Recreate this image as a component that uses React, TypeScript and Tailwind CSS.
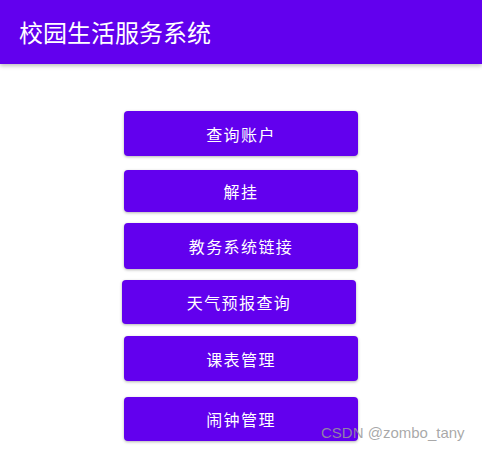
const font = { fontFamily: '"Noto Sans CJK SC", "Noto Sans", sans-serif' };

type Item = { label: string; cls: string };

const items: Item[] = [
  { label: "查询账户", cls: "mt-[47px] h-[45px]" },
  { label: "解挂", cls: "mt-[14px] h-[42px]" },
  { label: "教务系统链接", cls: "mt-[11px] h-[46px]" },
  { label: "天气预报查询", cls: "mt-[11px] h-[44px] -translate-x-[2px]" },
  { label: "课表管理", cls: "mt-[12px] h-[45px]" },
  { label: "闹钟管理", cls: "mt-[16px] h-[44px]" },
];

export default function App() {
  return (
    <div
      className="relative w-[482px] h-[452px] overflow-hidden bg-white"
      style={font}
    >
      <header className="h-16 bg-[#6200ee] flex items-center pl-[19px] shadow-[0_2px_4px_rgba(0,0,0,0.25)] relative z-10">
        <h1 className="text-white text-[24px] leading-none font-normal">
          校园生活服务系统
        </h1>
      </header>

      <div className="flex flex-col items-center">
        {items.map((it) => (
          <button
            key={it.label}
            type="button"
            className={`${it.cls} w-[234px] rounded-[4px] bg-[#6200ee] text-white text-[16px] tracking-[1.4px] flex items-center justify-center shadow-[0_1px_3px_rgba(0,0,0,0.3)]`}
          >
            {it.label}
          </button>
        ))}
      </div>

      {/* watermark */}
      <div
        className="absolute left-[321px] top-[425px] text-[15px] text-[#999999]/85 leading-none"
        style={{ fontFamily: '"Liberation Sans", Arial, sans-serif' }}
      >
        CSDN @zombo_tany
      </div>
    </div>
  );
}
